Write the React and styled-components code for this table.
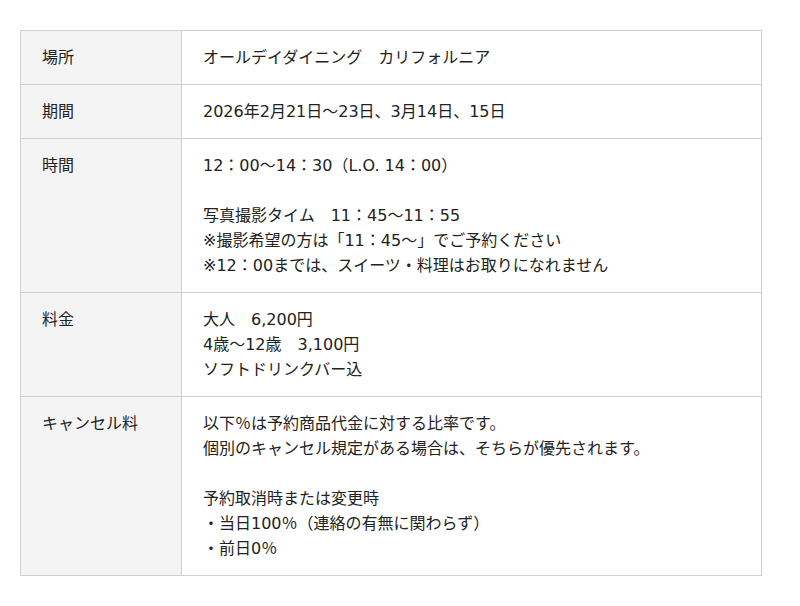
import React from "react";
import styled, { createGlobalStyle } from "styled-components";

const Global = createGlobalStyle`
  html, body { margin: 0; padding: 0; background: #fff; }
  body {
    font-family: "DejaVu Sans", "Noto Sans CJK JP", sans-serif;
    color: #222;
  }
`;

const Page = styled.div`
  padding: 30px 20px;
`;

const Table = styled.table`
  width: 742px;
  border-collapse: collapse;
  font-size: 16px;
  line-height: 25px;
`;

const Row = styled.tr``;

const Label = styled.th`
  width: 118px;
  background: #f4f4f4;
  border: 1px solid #cfcfcf;
  padding: 14px 21px;
  text-align: left;
  vertical-align: top;
  font-weight: normal;
`;

const Cell = styled.td`
  background: #fff;
  border: 1px solid #cfcfcf;
  padding: 14px 21px;
  text-align: left;
  vertical-align: top;
`;

const Line = styled.div`
  min-height: 25px;
  white-space: pre;
`;

const rows = [
  { label: "場所", lines: ["オールデイダイニング　カリフォルニア"] },
  { label: "期間", lines: ["2026年2月21日～23日、3月14日、15日"] },
  {
    label: "時間",
    lines: [
      "12：00～14：30（L.O. 14：00）",
      "",
      "写真撮影タイム　11：45～11：55",
      "※撮影希望の方は「11：45～」でご予約ください",
      "※12：00までは、スイーツ・料理はお取りになれません",
    ],
  },
  { label: "料金", lines: ["大人　6,200円", "4歳～12歳　3,100円", "ソフトドリンクバー込"] },
  {
    label: "キャンセル料",
    lines: [
      "以下％は予約商品代金に対する比率です。",
      "個別のキャンセル規定がある場合は、そちらが優先されます。",
      "",
      "予約取消時または変更時",
      "・当日100％（連絡の有無に関わらず）",
      "・前日0％",
    ],
  },
];

export default function App() {
  return (
    <Page>
      <Global />
      <Table>
        <tbody>
          {rows.map((r) => (
            <Row key={r.label}>
              <Label>{r.label}</Label>
              <Cell>
                {r.lines.map((l, i) => (
                  <Line key={i}>{l}</Line>
                ))}
              </Cell>
            </Row>
          ))}
        </tbody>
      </Table>
    </Page>
  );
}
